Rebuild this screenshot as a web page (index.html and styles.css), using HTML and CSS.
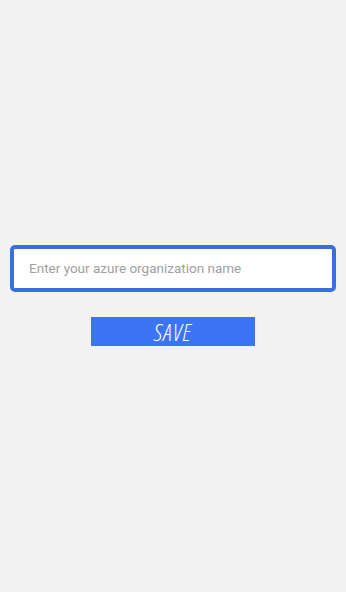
FILE: index.html
```html
<!DOCTYPE html>
<html>
<head>
<meta charset="utf-8">
<link rel="stylesheet" href="styles.css">
</head>
<body>
<main class="page">
  <div class="field">
    <span class="placeholder">Enter your azure organization name</span>
  </div>
  <button class="save">SAVE</button>
</main>
</body>
</html>
```
FILE: styles.css
```css
html, body {
  margin: 0;
  padding: 0;
  background: #f2f2f2;
  height: 100%;
}
.page {
  display: flex;
  flex-direction: column;
  align-items: center;
  padding: 245px 10px 0;
  box-sizing: border-box;
  height: 592px;
}
.field {
  box-sizing: border-box;
  width: 326px;
  height: 47px;
  border: 4px solid #3a6fe2;
  border-radius: 5px;
  background: #ffffff;
  display: flex;
  align-items: center;
  padding-left: 15px;
}
.placeholder {
  font-family: Roboto, "Liberation Sans", sans-serif;
  font-size: 13.5px;
  color: #a0a0a0;
  padding-bottom: 1px;
}
.save {
  margin-top: 25px;
  width: 164px;
  height: 29px;
  border: none;
  background: #3b74f4;
  color: #ffffff;
  font-family: "Open Sans", "DejaVu Sans", sans-serif;
  font-style: italic;
  font-stretch: 85%;
  font-size: 24px;
  font-weight: 300;
  letter-spacing: 1px;
  line-height: 29px;
  padding: 0;
}
```
